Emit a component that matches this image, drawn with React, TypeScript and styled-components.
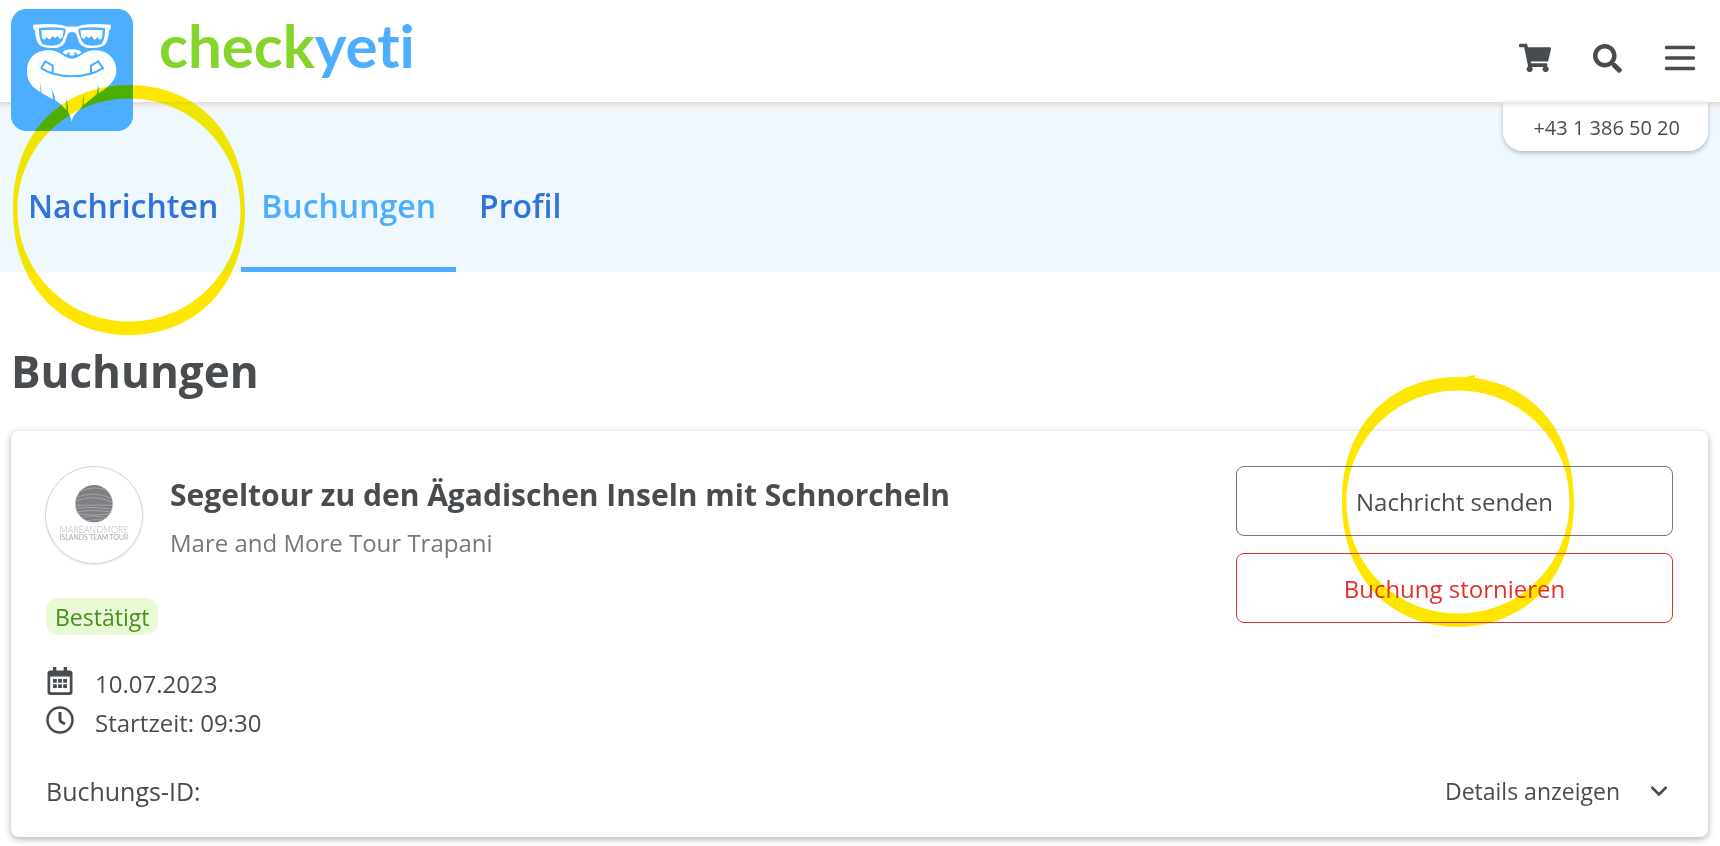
import React from "react";
import styled, { createGlobalStyle } from "styled-components";
import { FaSearch, FaShoppingCart } from "react-icons/fa";

const color = {
  ink: "#484c4f",
  muted: "#74787e",
  sky: "#4daeff",
  link: "#2f74da",
  band: "#eff7ff",
  red: "#e3312d",
  green: "#84d42c",
  marker: "#ffe600",
};

const GlobalStyle = createGlobalStyle`
  *, *::before, *::after { box-sizing: border-box; }
  body {
    margin: 0;
    background: #fff;
    color: ${color.ink};
    font-family: "Open Sans", "Noto Sans", sans-serif;
    font-size: 24px;
    line-height: 32px;
  }
  h1, h2, p, ul { margin: 0; padding: 0; }
  button { font: inherit; color: inherit; cursor: pointer; }
  a { color: inherit; text-decoration: none; }
`;

const Header = styled.header`
  position: relative;
  z-index: 1;
  display: flex;
  justify-content: space-between;
  height: 102px;
  padding: 0 24px 0 11px;
  background: #fff;
`;

const Brand = styled.a`
  display: flex;
  align-items: flex-start;
  gap: 26px;
  height: 102px;
  padding-top: 9px;
`;

const LogoMark = styled.svg`
  display: block;
  width: 122px;
  height: 122px;
  flex: none;
`;

const Wordmark = styled.span`
  font-family: Lato, sans-serif;
  font-weight: 700;
  font-size: 60px;
  line-height: 72px;
  font-variant-ligatures: none;
  color: ${color.green};
`;

const WordmarkAccent = styled.span`
  color: ${color.sky};
`;

const Actions = styled.div`
  display: flex;
  align-items: center;
  gap: 42px;
  padding-top: 14px;
`;

const IconButton = styled.button`
  display: flex;
  padding: 0;
  border: 0;
  background: none;
`;

const PhoneTab = styled.a`
  position: absolute;
  top: 102px;
  right: 12px;
  padding: 12px 28px 9px 30px;
  border-radius: 0 0 20px 20px;
  background: linear-gradient(#e6e6e6, #fff 6px);
  box-shadow: 0 2px 5px rgba(0, 0, 0, 0.25);
  font-size: 20px;
  line-height: 28px;
`;

const TabBar = styled.nav`
  height: 170px;
  padding-left: 8px;
  background: linear-gradient(#dcdcdc, #f8f8f8 7px, ${color.band} 7px);
`;

const TabList = styled.ul`
  display: flex;
  gap: 3px;
  height: 100%;
  list-style: none;
`;

const Tab = styled.li`
  position: relative;
  display: flex;
`;

const TabLink = styled.a<{ $active?: boolean }>`
  display: flex;
  align-items: center;
  padding: 42px 20px 0;
  border-bottom: 5px solid ${(p) => (p.$active ? color.sky : "transparent")};
  color: ${(p) => (p.$active ? color.sky : color.link)};
  font-size: 32px;
  font-weight: 600;
`;

const Marker = styled.svg`
  position: absolute;
  z-index: 2;
  width: 232px;
  height: 252px;
  mix-blend-mode: darken;
  pointer-events: none;
`;

const TabMarker = styled(Marker)`
  top: -19px;
  left: 5px;
`;

const ButtonMarker = styled(Marker)`
  top: -91px;
  left: calc(50% - 113px);
`;

const Main = styled.main`
  padding: 71px 12px 9px 11px;
`;

const PageTitle = styled.h1`
  font-size: 44px;
  line-height: 56px;
  font-weight: 700;
`;

const Card = styled.article`
  margin-top: 32px;
  padding: 35px 35px 30px 34px;
  border-radius: 8px;
  background: #fff;
  box-shadow: 0 2px 7px rgba(0, 0, 0, 0.32);
`;

const CardTop = styled.div`
  display: flex;
  justify-content: space-between;
  gap: 32px;
`;

const Provider = styled.div`
  display: flex;
  gap: 27px;
`;

const Avatar = styled.svg`
  display: block;
  width: 98px;
  height: 98px;
  flex: none;
  border: 1px solid #cfcfcf;
  border-radius: 50%;
  box-shadow: 0 1px 2px rgba(0, 0, 0, 0.12);
`;

const Trip = styled.div`
  padding-top: 7px;
`;

const TripTitle = styled.h2`
  font-size: 30px;
  line-height: 44px;
  font-weight: 700;
`;

const TripProvider = styled.p`
  margin-top: 10px;
  color: ${color.muted};
`;

const Badge = styled.span`
  display: inline-block;
  margin: 34px 0 0 1px;
  padding: 3px 9px 2px;
  border-radius: 12px;
  background: #eafad7;
  color: #45911c;
  font-size: 23px;
`;

const Buttons = styled.div`
  display: flex;
  flex: 0 0 437px;
  flex-direction: column;
  gap: 17px;
`;

const ButtonSlot = styled.div`
  position: relative;
`;

const OutlineButton = styled.button<{ $danger?: boolean }>`
  display: block;
  width: 100%;
  height: 70px;
  padding: 2px 0 0;
  border: 1px solid ${(p) => (p.$danger ? color.red : "#727685")};
  border-radius: 8px;
  background: none;
  color: ${(p) => (p.$danger ? color.red : color.ink)};
`;

const Facts = styled.ul`
  margin-top: 31px;
  list-style: none;
`;

const Fact = styled.li`
  display: flex;
  gap: 21px;
  height: 39px;
  padding-left: 1px;
  line-height: 36px;
`;

const FactIcon = styled.svg`
  display: block;
  width: 28px;
  height: 30px;
  flex: none;
`;

const CardFoot = styled.div`
  display: flex;
  justify-content: space-between;
  align-items: center;
  margin-top: 31px;
`;

const BookingId = styled.p`
  padding-left: 1px;
  font-size: 25px;
  line-height: 30px;
`;

const DetailsButton = styled.button`
  display: flex;
  align-items: center;
  gap: 30px;
  padding: 0 5px 0 0;
  border: 0;
  background: none;
  font-size: 23px;
`;

function MarkerShape({ tail = false }: { tail?: boolean }) {
  return (
    <>
      <path
        fill={color.marker}
        fillRule="evenodd"
        d="M0 126.700C0 48 50 2 116 2S232 48 232 126.700C232 206 180 252 116 252S0 206 0 126.700ZM4.500 127C4.500 189 54 238.500 116 238.500S227.500 189 227.500 127S178 15.500 116 15.500S4.500 65 4.500 127Z"
      />
      {tail && <path fill={color.marker} d="M122 3Q128 -.5 133 .5V6H122Z" />}
    </>
  );
}

function YetiLogo() {
  return (
    <LogoMark viewBox="33 27 366 366" aria-hidden="true">
      <rect x="33" y="27" width="366" height="366" rx="46" fill={color.sky} />
      <path
        fill="#fff"
        fillRule="evenodd"
        d="M100 74Q150 69 186 75Q196 80 216 80Q236 80 246 75Q282 69 332 74Q334 88 327 92Q324 122 316 133Q308 144 272 144Q246 143 238 128Q229 102 226 98Q216 94 206 98Q203 102 194 128Q186 143 160 144Q124 144 116 133Q108 122 105 92Q98 88 100 74ZM117 84Q116 112 125 129Q130 137 158 137Q180 136 186 124Q196 103 197 90Q196 84 184 83Q150 80 117 84ZM315 84Q316 112 307 129Q302 137 274 137Q252 136 246 124Q236 103 235 90Q236 84 248 83Q282 80 315 84Z"
      />
      <path
        fill="#fff"
        d="M124 91Q158 87 191 91L188 112L179 117L173 108L166 115L158 108L148 119L140 111L134 119L126 114ZM241 91Q274 87 308 91L306 114L299 119L292 111L284 120L274 108L266 115L259 108L252 117L244 112Z"
      />
      <path
        fill="#fff"
        d="M188 157Q192 148 216 148Q240 148 244 157Q240 165 231 163Q229 156 224 156Q222 158 224 162Q224 167 216 167Q208 167 208 162Q210 158 208 156Q203 156 201 163Q192 165 188 157Z"
      />
      <path
        fill="#fff"
        d="M216 176C192 176 184 151 145 151C104 151 81 178 81 214C81 246 98 264 121 276L121 248Q124 264 124 278L158 298Q160 278 151 263Q164 278 166 301Q184 312 199 331L199 293Q204 312 205 337Q212 348 215 365Q218 346 238 329Q248 318 247 318Q247 300 252 282Q251 300 251 315Q272 298 290 283Q294 268 293 252Q298 266 296 280C328 259 349 238 349 212C349 178 324 151 286 151C248 151 240 176 216 176Z"
      />
      <path
        fill="none"
        stroke={color.sky}
        strokeWidth="6"
        d="M123 205L136 184L158 197V220M123 205Q164 229 216 229T309 205L295 184L273 197V220"
      />
    </LogoMark>
  );
}

function ProviderLogo() {
  return (
    <Avatar viewBox="0 0 98 98" role="img" aria-label="Mare and More Islands Team Tour">
      <circle cx="49" cy="49" r="49" fill="#fff" />
      <circle cx="49" cy="37.500" r="19" fill="#857d7b" />
      <g fill="none" stroke="#9aa7bd" strokeWidth="1">
        <path d="M34 25Q48 19 60 23L64 27M31 31Q48 24 67 32M30 35Q48 27 68 36M31 39H68M30 42Q48 40 68 43M31 46Q46 43 67 46M33 48Q50 50 65 48M36 52Q48 48 63 52M41 55Q50 53 58 54" />
      </g>
      <text x="49" y="67" textAnchor="middle" fontFamily="Lato, sans-serif" fontWeight="300" fontSize="9" fill="#b8b8b8">
        MAREANDMORE
      </text>
      <text x="49" y="75" textAnchor="middle" fontFamily="Lato, sans-serif" fontWeight="400" fontSize="7" fill="#a8a8a8">
        ISLANDS TEAM TOUR
      </text>
    </Avatar>
  );
}

export default function App() {
  return (
    <>
      <GlobalStyle />
      <Header>
        <Brand href="#" aria-label="checkyeti">
          <YetiLogo />
          <Wordmark>
            check<WordmarkAccent>yeti</WordmarkAccent>
          </Wordmark>
        </Brand>
        <Actions>
          <IconButton aria-label="Warenkorb">
            <FaShoppingCart size={32} />
          </IconButton>
          <IconButton aria-label="Suche">
            <FaSearch size={29} />
          </IconButton>
          <IconButton aria-label="Menü">
            <svg width="32" height="28" viewBox="0 0 32 28" stroke="currentColor" strokeWidth="3.400" strokeLinecap="round">
              <path d="M2.500 3.500H29.500M2.500 14H29.500M2.500 24.500H29.500" />
            </svg>
          </IconButton>
        </Actions>
        <PhoneTab href="tel:+4313865020">+43 1 386 50 20</PhoneTab>
      </Header>
      <TabBar>
        <TabList>
          <Tab>
            <TabLink href="#nachrichten">Nachrichten</TabLink>
            <TabMarker viewBox="0 0 232 252" aria-hidden="true">
              <MarkerShape />
            </TabMarker>
          </Tab>
          <Tab>
            <TabLink href="#buchungen" $active aria-current="page">
              Buchungen
            </TabLink>
          </Tab>
          <Tab>
            <TabLink href="#profil">Profil</TabLink>
          </Tab>
        </TabList>
      </TabBar>
      <Main>
        <PageTitle>Buchungen</PageTitle>
        <Card>
          <CardTop>
            <div>
              <Provider>
                <ProviderLogo />
                <Trip>
                  <TripTitle>Segeltour zu den Ägadischen Inseln mit Schnorcheln</TripTitle>
                  <TripProvider>Mare and More Tour Trapani</TripProvider>
                </Trip>
              </Provider>
              <Badge>Bestätigt</Badge>
            </div>
            <Buttons>
              <ButtonSlot>
                <OutlineButton>Nachricht senden</OutlineButton>
                <ButtonMarker viewBox="0 0 232 252" aria-hidden="true">
                  <MarkerShape tail />
                </ButtonMarker>
              </ButtonSlot>
              <OutlineButton $danger>Buchung stornieren</OutlineButton>
            </Buttons>
          </CardTop>
          <Facts>
            <Fact>
              <FactIcon viewBox="0 0 28 30" aria-hidden="true">
                <path
                  fill="currentColor"
                  fillRule="evenodd"
                  d="M7 1h3.300v3.500h7.400V1h3.300v3.500H23.500q3 0 3 3v18.500q0 3-3 3H4.500q-3 0-3-3V7.500q0-3 3-3h2.500ZM4.200 10.500V25q0 1.300 1.300 1.300h17q1.300 0 1.300-1.300V10.500Z"
                />
                <path
                  fill="currentColor"
                  d="M7 13h3.800v3.800H7zM12.100 13h3.800v3.800h-3.800zM17.200 13h3.800v3.800h-3.800zM7 18.300h3.800v3.800H7zM12.100 18.300h3.800v3.800h-3.800zM17.200 18.300h3.800v3.800h-3.800z"
                />
              </FactIcon>
              10.07.2023
            </Fact>
            <Fact>
              <FactIcon viewBox="0 0 28 30" aria-hidden="true" fill="none" stroke="currentColor">
                <circle cx="14" cy="15" r="12.500" strokeWidth="2.500" />
                <path d="M14 7V14.500Q14 16 15.500 17L19 19" strokeWidth="3" />
              </FactIcon>
              Startzeit: 09:30
            </Fact>
          </Facts>
          <CardFoot>
            <BookingId>Buchungs-ID:</BookingId>
            <DetailsButton aria-expanded="false">
              Details anzeigen
              <svg width="18" height="14" viewBox="0 0 18 14" fill="none" stroke="currentColor" strokeWidth="2.600">
                <path d="M1.500 3L9 10.500L16.500 3" />
              </svg>
            </DetailsButton>
          </CardFoot>
        </Card>
      </Main>
    </>
  );
}
